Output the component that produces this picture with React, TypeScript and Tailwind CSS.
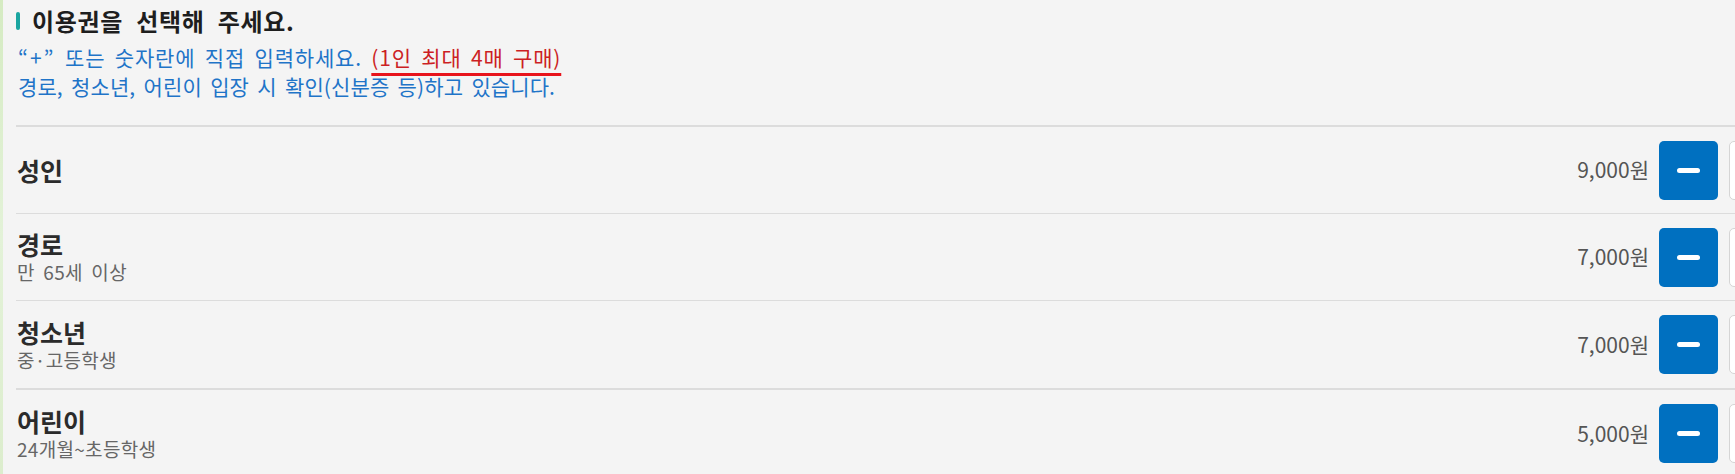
import React from "react";

interface Ticket {
  id: string;
  name: string;
  desc?: string;
  price: string;
  rowClass: string;
}

const TICKETS: Ticket[] = [
  { id: "adult", name: "성인", price: "9,000원", rowClass: "h-[87px] border-b" },
  { id: "senior", name: "경로", desc: "만 65세 이상", price: "7,000원", rowClass: "h-[87px] border-b" },
  { id: "youth", name: "청소년", desc: "중·고등학생", price: "7,000원", rowClass: "h-[89px] border-b-2" },
  { id: "child", name: "어린이", desc: "24개월~초등학생", price: "5,000원", rowClass: "h-[87px]" },
];

const FONT = "font-['Noto_Sans_CJK_KR','Noto_Sans',sans-serif]";

function MinusButton() {
  return (
    <button
      type="button"
      className="flex h-[59px] w-[59px] shrink-0 items-center justify-center rounded-[5px] bg-[#0070c0]"
    >
      <span className="block h-[5px] w-[23px] rounded-full bg-white" />
    </button>
  );
}

function TicketRow({ ticket }: { ticket: Ticket }) {
  return (
    <div className={`flex items-center justify-between border-[#dcdcdc] pl-px ${ticket.rowClass}`}>
      <div className="flex flex-col">
        <p className="text-[25px] leading-[30px] font-bold text-[#2b2b2b]">{ticket.name}</p>
        {ticket.desc && (
          <p className="text-[19px] leading-[26px] tracking-[0.3px] text-[#666666] [word-spacing:4px]">
            {ticket.desc}
          </p>
        )}
      </div>
      <div className="flex items-center">
        <span className="mr-[10px] text-[21px] text-[#555555]">{ticket.price}</span>
        <MinusButton />
        <input
          readOnly
          value="0"
          className="ml-[11px] h-[59px] w-[70px] rounded-[5px] border border-[#d5d5d5] bg-white text-center text-[20px] text-[#333]"
        />
        <button
          type="button"
          className="ml-[11px] flex h-[59px] w-[59px] items-center justify-center rounded-[5px] bg-[#0070c0] text-white"
        >
          +
        </button>
      </div>
    </div>
  );
}

export default function App() {
  return (
    <div className={`flex h-[474px] w-full overflow-hidden bg-[#f4f4f4] ${FONT}`}>
      <div className="w-[3px] shrink-0 bg-gradient-to-b from-[#d5ebc2] via-[#e3f2d8] to-[#dcedcd]" />
      <div className="ml-[13px] w-[1853px] shrink-0">
        <div className="pt-[5px]">
          <div className="flex h-[32px] items-center gap-[12px]">
            <span className="block h-[18px] w-[4px] rounded-[2px] bg-[#1aa5a0]" />
            <h2 className="text-[24px] leading-[32px] font-bold tracking-[0.7px] text-[#1e1e1e] [word-spacing:7px]">
              이용권을 선택해 주세요.
            </h2>
          </div>
          <p className="mt-[6px] pl-[2px] text-[21px] leading-[29px] tracking-[0.8px] text-[#1f74c8] [word-spacing:4px]">
            <span className="tracking-[2px]">“+”</span> 또는 숫자란에 직접 입력하세요.{" "}
            <span className="text-[#cc1f24] underline decoration-[#e8141c] decoration-[3px] underline-offset-[7px]">
              (1인 최대 4매 구매)
            </span>
          </p>
          <p className="pl-[2px] text-[21px] leading-[29px] tracking-[0.1px] text-[#1f74c8] [word-spacing:3.5px]">
            경로, 청소년, 어린이 입장 시 확인(신분증 등)하고 있습니다.
          </p>
        </div>
        <div className="mt-[24px] border-t-2 border-[#dcdcdc]">
          {TICKETS.map((t) => (
            <TicketRow key={t.id} ticket={t} />
          ))}
        </div>
      </div>
    </div>
  );
}
